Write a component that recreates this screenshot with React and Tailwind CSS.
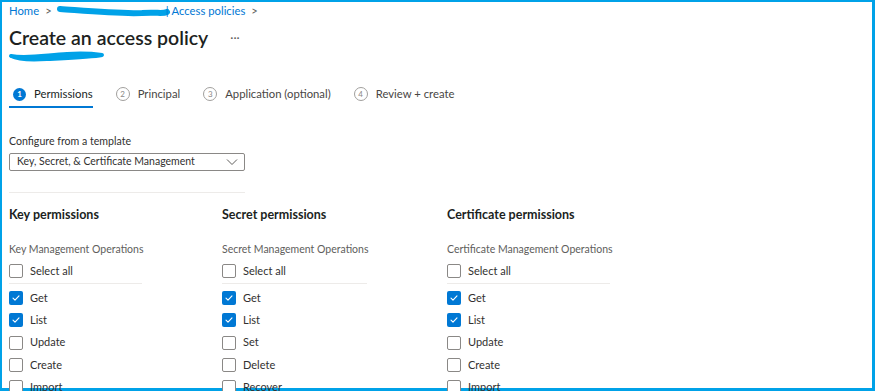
import React from 'react';

const font = { fontFamily: 'Lato, "Open Sans", sans-serif' };

function Check({ checked }) {
  if (checked) {
    return (
      <span className="flex h-[14px] w-[14px] shrink-0 items-center justify-center rounded-[2px] bg-[#0078d4]">
        <svg width="10" height="10" viewBox="0 0 10 10" fill="none">
          <path d="M2 5.2l2 2 4-4.4" stroke="white" strokeWidth="1.1" strokeLinecap="round" strokeLinejoin="round" />
        </svg>
      </span>
    );
  }
  return <span className="h-[14px] w-[14px] shrink-0 rounded-[2px] border border-[#8a8886] bg-white" />;
}

function Row({ label, checked }) {
  return (
    <div className="flex h-[22px] items-center gap-[7px]">
      <Check checked={checked} />
      <span className="text-[11px] text-[#323130]">{label}</span>
    </div>
  );
}

function Column({ title, ops, divider, items, width }) {
  return (
    <div className={width}>
      <div className="mt-[1px] flex h-[20px] items-center text-[12.5px] font-bold text-[#201f1e]">{title}</div>
      <div className="mt-[17px] flex h-[16px] items-center text-[10.5px] text-[#605e5c]">{ops}</div>
      <div className="mt-[5px] flex h-[16px] items-center gap-[7px]">
        <Check />
        <span className="text-[11px] text-[#323130]">Select all</span>
      </div>
      <div className={`mt-[4px] h-px bg-[#edebe9] ${divider}`} />
      <div className="mt-[3px] flex flex-col gap-y-[0.3px]">
        {items.map(([l, c]) => (
          <Row key={l} label={l} checked={c} />
        ))}
      </div>
    </div>
  );
}

function Step({ n, label, active }) {
  return (
    <div className="relative flex h-[26px] items-center gap-[8px]">
      {active ? (
        <span className="flex h-[13px] w-[13px] items-center justify-center rounded-full bg-[#0078d4] text-[8px] font-bold text-white">{n}</span>
      ) : (
        <span className="flex h-[14px] w-[14px] items-center justify-center rounded-full border border-[#a19f9d] text-[8px] text-[#8a8886]">{n}</span>
      )}
      <span className={`text-[11.3px] ${active ? 'text-[#201f1e]' : 'text-[#484644]'}`}>{label}</span>
      {active && <span className="absolute bottom-[-1px] left-[-4px] right-0 h-[2px] bg-[#0078d4]" />}
    </div>
  );
}

export default function App() {
  return (
    <div style={font} className="h-[391px] w-[875px] overflow-hidden bg-white">
      <div className="h-full w-full border-t-2 border-l-2 border-r-[3px] border-b-[3px] border-[#00a2e8] pl-[7px]">
        {/* breadcrumb */}
        <div className="relative mt-[1px] flex h-[16px] items-center text-[11.3px] text-[#0078d4]">
          <span>Home</span>
          <span className="ml-[6px] text-[#605e5c]">&gt;</span>
          <span className="ml-[6px] w-[108px]">&nbsp;</span>
          <span className="relative z-10">|</span>
          <span className="ml-[3px]">Access policies</span>
          <span className="ml-[6px] text-[#605e5c]">&gt;</span>
          <svg className="absolute left-[48px] top-[1px]" width="118" height="16" viewBox="0 0 118 16">
            <path d="M3 5 C30 7, 60 10, 85 9 C100 8, 106 10, 110 8" stroke="#00a2e8" strokeWidth="6" fill="none" strokeLinecap="round" />
          </svg>
        </div>

        {/* title */}
        <div className="mt-[5px] flex h-[28px] items-center">
          <h1 className="text-[19.5px] font-semibold text-[#201f1e]">Create an access policy</h1>
          <span className="ml-[22px] text-[12px] text-[#605e5c]">···</span>
        </div>
        <div className="relative h-[12px]">
          <svg className="absolute left-[-2px] top-[-3px]" width="100" height="14" viewBox="0 0 100 14">
            <path d="M4 7 C20 10, 40 6, 60 5 C75 4, 88 5, 95 6 C85 8, 60 9, 40 10 C25 11, 10 10, 4 7Z" stroke="#00a2e8" strokeWidth="4" fill="#00a2e8" strokeLinejoin="round" />
          </svg>
        </div>

        {/* steps */}
        <div className="mt-[17px] flex items-center gap-[23px] pl-[4px]">
          <Step n="1" label="Permissions" active />
          <Step n="2" label="Principal" />
          <Step n="3" label="Application (optional)" />
          <Step n="4" label="Review + create" />
        </div>

        {/* template */}
        <div className="mt-[27px] flex h-[16px] items-center text-[10.6px] text-[#323130]">Configure from a template</div>
        <div className="mt-[3px] flex h-[18px] w-[236px] items-center justify-between rounded-[2px] border border-[#8a8886] pl-[7px] pr-[6px]">
          <span className="text-[10.5px] text-[#323130]">Key, Secret, &amp; Certificate Management</span>
          <svg width="12" height="8" viewBox="0 0 12 8" fill="none">
            <path d="M1 1.5l5 5 5-5" stroke="#605e5c" strokeWidth="1" />
          </svg>
        </div>
        <div className="mt-[21px] h-px w-[236px] bg-[#edebe9]" />

        {/* permission columns */}
        <div className="mt-[11px] flex">
          <Column
            width="w-[213px]"
            title="Key permissions"
            ops="Key Management Operations"
            divider="w-[133px]"
            items={[['Get', true], ['List', true], ['Update'], ['Create'], ['Import']]}
          />
          <Column
            width="w-[225px]"
            title="Secret permissions"
            ops="Secret Management Operations"
            divider="w-[145px]"
            items={[['Get', true], ['List', true], ['Set'], ['Delete'], ['Recover']]}
          />
          <Column
            width="w-[250px]"
            title="Certificate permissions"
            ops="Certificate Management Operations"
            divider="w-[163px]"
            items={[['Get', true], ['List', true], ['Update'], ['Create'], ['Import']]}
          />
        </div>
      </div>
    </div>
  );
}
